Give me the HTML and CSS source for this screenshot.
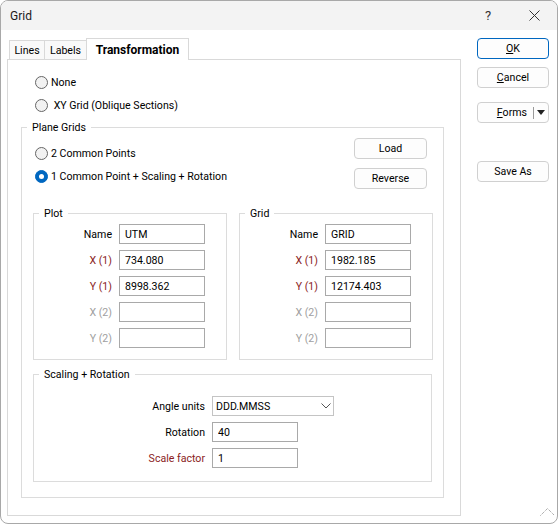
FILE: index.html
```html
<!DOCTYPE html>
<html lang="en">
<head>
    <meta charset="UTF-8">
    <title>Grid</title>
    <link rel="stylesheet" href="styles.css">
</head>
<body>

<div class="window">
    <div class="titlebar">
        <span class="title">Grid</span>
        <span class="caption-btn">?</span>
        <span class="caption-btn">
            <svg width="11" height="11" viewBox="0 0 11 11"><path d="M0.5 0.5L10.5 10.5M10.5 0.5L0.5 10.5" stroke="#333" stroke-width="1"/></svg>
        </span>
    </div>

    <div class="client">
        <div class="tabs">
            <div class="tabstrip">
                <div class="tab tab-lines">Lines</div>
                <div class="tab tab-labels">Labels</div>
                <div class="tab tab-transform active">Transformation</div>
            </div>

            <div class="tabpanel">
                <label class="radio"><span class="dot"></span>None</label>
                <label class="radio"><span class="dot"></span>&nbsp;XY Grid (Oblique Sections)</label>

                <div class="group plane">
                    <div class="group-title">Plane Grids</div>
                    <div class="plane-top">
                        <div class="plane-radios">
                            <label class="radio"><span class="dot"></span>2 Common Points</label>
                            <label class="radio"><span class="dot checked"></span>1 Common Point + Scaling + Rotation</label>
                        </div>
                        <div class="plane-btns">
                            <button class="btn">Load</button>
                            <button class="btn">Reverse</button>
                        </div>
                    </div>

                    <div class="points">
                        <div class="group point">
                            <div class="group-title">Plot</div>
                            <div class="fields">
                                <label>Name</label><input class="edit" value="UTM">
                                <label class="req">X (1)</label><input class="edit" value="734.080">
                                <label class="req">Y (1)</label><input class="edit" value="8998.362">
                                <label class="off">X (2)</label><input class="edit" disabled>
                                <label class="off">Y (2)</label><input class="edit" disabled>
                            </div>
                        </div>
                        <div class="group point">
                            <div class="group-title">Grid</div>
                            <div class="fields">
                                <label>Name</label><input class="edit" value="GRID">
                                <label class="req">X (1)</label><input class="edit" value="1982.185">
                                <label class="req">Y (1)</label><input class="edit" value="12174.403">
                                <label class="off">X (2)</label><input class="edit" disabled>
                                <label class="off">Y (2)</label><input class="edit" disabled>
                            </div>
                        </div>
                    </div>

                    <div class="group scaling">
                        <div class="group-title">Scaling + Rotation</div>
                        <div class="fields scale-fields">
                            <label>Angle units</label>
                            <div class="combo">
                                <span>DDD.MMSS</span>
                                <svg width="10" height="6" viewBox="0 0 10 6"><path d="M0.5 0.5L5 5L9.5 0.5" fill="none" stroke="#555" stroke-width="1"/></svg>
                            </div>
                            <label>Rotation</label><input class="edit" value="40">
                            <label class="req">Scale factor</label><input class="edit" value="1">
                        </div>
                    </div>
                </div>
            </div>
        </div>

        <div class="side">
            <button class="btn ok"><u>O</u>K</button>
            <button class="btn cancel"><u>C</u>ancel</button>
            <div class="btn forms">
                <span class="forms-main"><u>F</u>orms</span>
                <span class="forms-sep"></span>
                <span class="forms-arrow">
                    <svg width="8" height="5" viewBox="0 0 8 5"><path d="M0 0H8L4 5Z" fill="#222"/></svg>
                </span>
            </div>
            <button class="btn saveas">Save As</button>
        </div>
    </div>

    <!-- resize grip -->
    <svg class="grip" width="15" height="8" viewBox="0 0 15 8"><path d="M0.5 7.5L7.5 0.5L14.5 7.5" fill="none" stroke="#8a8a8a" stroke-width="1" stroke-dasharray="1 1"/></svg>
</div>

</body>
</html>
```

FILE: styles.css
```css
body {
    margin: 0;
    font-family: Roboto, "Liberation Sans", sans-serif;
    font-size: 10.6px;
    color: #000;
    background: #fff;
}
.window {
    position: relative;
    width: 558px;
    height: 524px;
    box-sizing: border-box;
    border: 1px solid #a8a8a8;
    border-radius: 8px;
    overflow: hidden;
    background: #fff;
}
.titlebar {
    display: flex;
    align-items: center;
    height: 29px;
    padding-left: 9px;
    background: #f3f3f3;
}
.title {
    flex: 1;
    font-size: 12px;
    color: #1b1b1b;
}
.caption-btn {
    width: 46px;
    height: 29px;
    display: flex;
    align-items: center;
    justify-content: center;
    font-size: 13px;
    color: #333;
}

.client {
    display: flex;
    padding: 8px 0 0 6px;
}
.tabs {
    width: 454px;
}
.tabstrip {
    display: flex;
    align-items: flex-end;
    height: 21px;
    padding-left: 2px;
}
.tab {
    box-sizing: border-box;
    height: 19px;
    display: flex;
    align-items: center;
    justify-content: center;
    border: 1px solid #d9d9d9;
    border-bottom: 0;
    background: #f9f9f9;
}
.tab + .tab {
    margin-left: -1px;
}
.tab-lines { width: 36px; }
.tab-labels { width: 43px; }
.tab-transform { width: 103px; }
.tab.active {
    position: relative;
    z-index: 1;
    height: 22px;
    margin-bottom: -1px;
    background: #fff;
    font-weight: bold;
    font-size: 12px;
}
.tabpanel {
    box-sizing: border-box;
    height: 457px;
    border: 1px solid #d9d9d9;
    padding: 0 16px 0 13px;
}

.radio {
    display: flex;
    align-items: center;
    height: 16px;
    margin-left: 14px;
}
.radio + .radio {
    margin-top: 7px;
}
.tabpanel > .radio:first-child {
    margin-top: 14px;
}
.dot {
    box-sizing: border-box;
    width: 13px;
    height: 13px;
    margin-right: 3px;
    border: 1px solid #666;
    border-radius: 50%;
    background: #f2f2f2;
    display: flex;
    align-items: center;
    justify-content: center;
}
.dot.checked {
    border-color: #0067c0;
    background: #0067c0;
}
.dot.checked::after {
    content: "";
    width: 5px;
    height: 5px;
    border-radius: 50%;
    background: #fff;
}

.group {
    display: flex;
    flex-direction: column;
    border: 1px solid #dcdcdc;
}
.group-title {
    align-self: flex-start;
    margin: -7px 0 -7px 5px;
    padding: 0 5px;
    line-height: 14px;
    background: #fff;
}
.plane {
    margin-top: 14px;
}
.plane-top {
    display: flex;
    justify-content: space-between;
    margin-top: 10px;
}
.plane-radios {
    margin-top: 7px;
}
.plane-radios .radio {
    margin-left: 13px;
}
.plane-btns {
    display: flex;
    flex-direction: column;
    gap: 9px;
    margin-right: 16px;
}
.btn {
    box-sizing: border-box;
    width: 73px;
    height: 21px;
    margin: 0;
    padding: 0;
    border: 1px solid #d0d0d0;
    border-radius: 4px;
    background: #fdfdfd;
    font: inherit;
    color: #000;
}

.points {
    display: flex;
    gap: 12px;
    margin: 24px 0 0 11px;
}
.point {
    width: 194px;
    box-sizing: border-box;
}
.fields {
    display: grid;
    grid-template-columns: 78px 86px;
    column-gap: 7px;
    row-gap: 6px;
    align-items: center;
    margin: 10px 0 11px;
}
.fields label {
    justify-self: end;
}
.edit {
    box-sizing: border-box;
    width: 86px;
    height: 20px;
    margin: 0;
    padding: 0 5px;
    border: 1px solid #a9a9a9;
    border-radius: 0;
    background: #fff;
    font: inherit;
    color: #000;
    outline: none;
}
.req { color: #8a1c1c; }
.off { color: #a0a0a0; }

.scaling {
    margin: 14px 11px 15px;
}
.scale-fields {
    grid-template-columns: 171px auto;
    justify-items: start;
    margin: 21px 0 13px;
}
.combo {
    box-sizing: border-box;
    width: 122px;
    height: 20px;
    display: flex;
    align-items: center;
    justify-content: space-between;
    padding: 0 2px 0 3px;
    border: 1px solid #c4c4c4;
}

.side {
    display: flex;
    flex-direction: column;
    width: 72px;
    margin-left: 16px;
}
.side .btn {
    width: 72px;
}
.ok {
    border-color: #0067c0;
}
.cancel { margin-top: 8px; }
.saveas { margin-top: 38px; }
.forms {
    display: flex;
    align-items: center;
    margin-top: 14px;
}
.forms-main {
    flex: 1;
    text-align: right;
    padding-right: 6px;
}
.forms-sep {
    width: 1px;
    height: 12px;
    background: #9a9a9a;
}
.forms-arrow {
    width: 14px;
    display: flex;
    justify-content: center;
}

.grip {
    position: absolute;
    right: 2px;
    bottom: 7px;
}
```
